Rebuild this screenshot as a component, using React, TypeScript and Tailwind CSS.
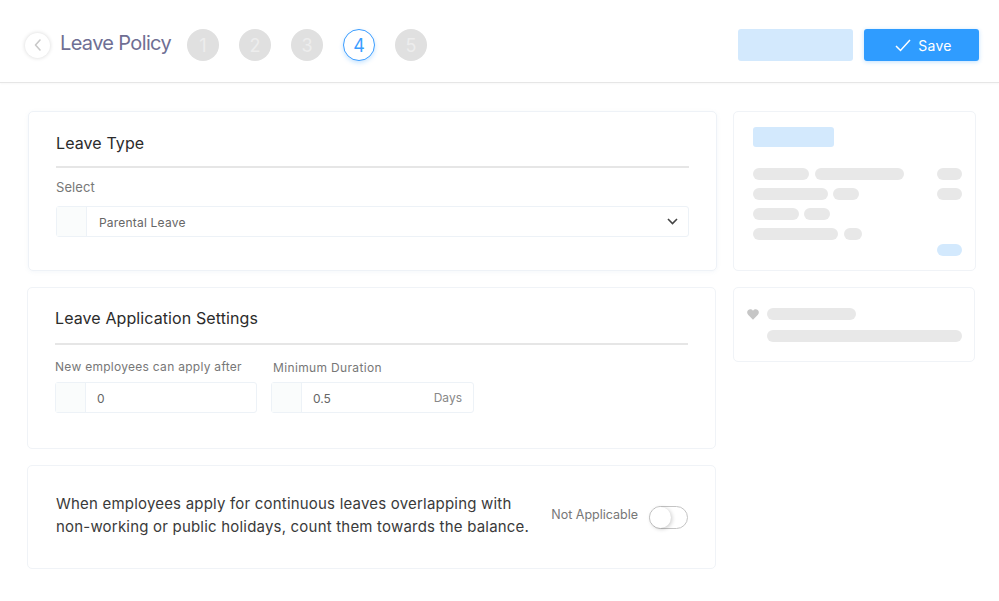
import React from "react";

const font = { fontFamily: "Inter, 'Noto Sans', sans-serif" };

function Pill({ w, blue = false }: { w: string; blue?: boolean }) {
  return <div className={`h-3 rounded-full ${w} ${blue ? "bg-[#d3e9fd]" : "bg-[#e8e8e8]"}`} />;
}

function Step({ n, active = false }: { n: number; active?: boolean }) {
  return (
    <div
      className={
        active
          ? "flex h-8 w-8 items-center justify-center rounded-full border border-[#3b9dff] bg-white text-[18px] text-[#3b9dff] shadow-[0_2px_4px_rgba(47,156,255,0.25)]"
          : "flex h-8 w-8 items-center justify-center rounded-full bg-[#e0e0e0] text-[18px] text-[#ededed]"
      }
    >
      {n}
    </div>
  );
}

function Prefix() {
  return <div className="h-full w-[30px] shrink-0 border-r border-[#edf2f7] bg-[#fafcfc]" />;
}

export default function App() {
  return (
    <div className="relative h-[601px] w-[999px] overflow-hidden bg-white" style={font}>
      <header className="flex h-[83px] items-center border-b border-[#e6e6e6] pl-[25px] pr-[20px] pt-[8px] shadow-[0_1px_2px_rgba(0,0,0,0.03)]">
        <div className="flex h-[25px] w-[25px] items-center justify-center rounded-full bg-white shadow-[0_0_4px_rgba(0,0,0,0.16)]">
          <svg width="14" height="14" viewBox="0 0 14 14" fill="none" stroke="#c8c8c8" strokeWidth="1.6" strokeLinecap="round" strokeLinejoin="round">
            <path d="M9 2 L4.5 7 L9 12" />
          </svg>
        </div>
        <h1 className="ml-[10px] mb-[4px] w-[127px] text-[20px] font-normal tracking-[-0.65px] text-[#6f6f94]">Leave Policy</h1>
        <div className="flex items-center gap-[20px]">
          <Step n={1} />
          <Step n={2} />
          <Step n={3} />
          <Step n={4} active />
          <Step n={5} />
        </div>
        <div className="ml-auto flex items-center gap-[11px]">
          <div className="h-8 w-[115px] rounded-[3px] bg-[#d3e9fd]" />
          <button className="flex h-8 w-[115px] items-center justify-center gap-[7px] rounded-[3px] bg-[#2f9cff] pl-1 text-[14px] tracking-[0.3px] text-white shadow-[0_1px_4px_rgba(47,156,255,0.3)]">
            <svg width="16" height="13" viewBox="0 0 16 13" fill="none" stroke="white" strokeWidth="1.5">
              <path d="M1 7 L5.5 11.5 L15 1" />
            </svg>
            Save
          </button>
        </div>
      </header>

      <main className="flex gap-4 pl-[27px] pr-[23px] pt-[28px]">
        <div className="flex w-[690px] flex-col gap-[16px]">
          <section className="ml-[1px] h-[160px] w-[689px] rounded-[5px] border border-[#eef2f7] px-[27px] pt-[19px] shadow-[0_1px_4px_rgba(120,150,190,0.08)]">
            <h2 className="border-b-2 border-[#e6e6e6] pb-[11px] text-[16px] leading-[24px] font-normal tracking-[0.1px] text-[#2b2b2b]">Leave Type</h2>
            <div className="mt-[11px] text-[13px] leading-[16px] tracking-[0.1px] text-[#777]">Select</div>
            <div className="mt-[11px] flex h-[31px] items-center rounded-[3px] border border-[#edf2f7] text-[12px] tracking-[0.2px] text-[#666]">
              <Prefix />
              <span className="ml-[12px] mt-[2px]">Parental Leave</span>
              <svg className="ml-auto mr-[10px]" width="11" height="7" viewBox="0 0 11 7" fill="none" stroke="#444" strokeWidth="1.6">
                <path d="M1 1 L5.5 5.5 L10 1" />
              </svg>
            </div>
          </section>

          <section className="h-[162px] w-[689px] rounded-[5px] border border-[#f0f3f7] px-[27px] pt-[18px]">
            <h2 className="border-b-2 border-[#e6e6e6] pb-[13px] text-[16px] leading-[24px] font-normal tracking-[0.1px] text-[#2b2b2b]">Leave Application Settings</h2>
            <div className="mt-[14px] flex gap-[14px]">
              <div className="w-[202px]">
                <div className="text-[12px] leading-[16px] tracking-[0.28px] text-[#777]">New employees can apply after</div>
                <div className="mt-[7px] flex h-[31px] items-center rounded-[3px] border border-[#edf2f7] text-[12px] text-[#666]">
                  <Prefix />
                  <span className="ml-[11px] mt-[2px]">0</span>
                </div>
              </div>
              <div className="w-[203px]">
                <div className="ml-[2px] mt-[1px] text-[12px] leading-[16px] tracking-[0.35px] text-[#777]">Minimum Duration</div>
                <div className="mt-[6px] flex h-[31px] items-center rounded-[3px] border border-[#edf2f7] text-[12px] text-[#666]">
                  <Prefix />
                  <span className="ml-[11px] mt-[2px]">0.5</span>
                  <span className="ml-auto mr-[11px] text-[#888]">Days</span>
                </div>
              </div>
            </div>
          </section>

          <section className="flex h-[104px] w-[689px] items-center rounded-[5px] border border-[#f0f3f7] pl-[28px] pr-[27px]">
            <p className="mb-[4px] w-[490px] text-[15px] leading-[23px] tracking-[0.2px] text-[#3a3a3a]">
              When employees apply for continuous leaves overlapping with
              <br />
              non-working or public holidays, count them towards the balance.
            </p>
            <span className="mb-[3px] ml-auto text-[12.5px] text-[#777]">Not Applicable</span>
            <div className="relative ml-[11px] h-[23px] w-[39px] rounded-full border border-[#c4c4c4] bg-white">
              <div className="absolute left-0 top-0 h-[21px] w-[21px] rounded-full bg-white shadow-[1px_1px_4px_rgba(0,0,0,0.22)]" />
            </div>
          </section>
        </div>

        <aside className="flex w-[243px] flex-col gap-[16px]">
          <section className="h-[160px] rounded-[5px] border border-[#f0f3f7] pl-[19px] pr-[13px] pt-[15px]">
            <div className="h-5 w-[81px] rounded-[3px] bg-[#d3e9fd]" />
            <div className="mt-[21px] flex flex-col gap-2">
              <div className="flex gap-[6px]">
                <Pill w="w-[56px]" />
                <Pill w="w-[89px]" />
                <Pill w="ml-auto w-[25px]" />
              </div>
              <div className="flex gap-[5px]">
                <Pill w="w-[75px]" />
                <Pill w="w-[26px]" />
                <Pill w="ml-auto w-[25px]" />
              </div>
              <div className="flex gap-[5px]">
                <Pill w="w-[46px]" />
                <Pill w="w-[26px]" />
              </div>
              <div className="flex gap-[6px]">
                <Pill w="w-[85px]" />
                <Pill w="w-[18px]" />
              </div>
            </div>
            <div className="mt-[4px] flex justify-end">
              <Pill w="w-[25px]" blue />
            </div>
          </section>

          <section className="h-[75px] w-[242px] rounded-[5px] border border-[#f0f3f7] pl-[13px] pr-[12px] pt-[20px]">
            <div className="flex gap-[8px]">
              <svg className="mt-[1px] shrink-0" width="12" height="11" viewBox="0 0 24 22" fill="#c6c6c6">
                <path d="M12 21.5 L2.2 11.5 C-0.6 8.5 -0.2 4 2.6 1.8 C5.4 -0.4 9.6 0.2 12 3.4 C14.4 0.2 18.6 -0.4 21.4 1.8 C24.2 4 24.6 8.5 21.8 11.5 Z" />
              </svg>
              <div className="flex flex-1 flex-col gap-[10px]">
                <Pill w="w-[89px]" />
                <Pill w="w-full" />
              </div>
            </div>
          </section>
        </aside>
      </main>
    </div>
  );
}
